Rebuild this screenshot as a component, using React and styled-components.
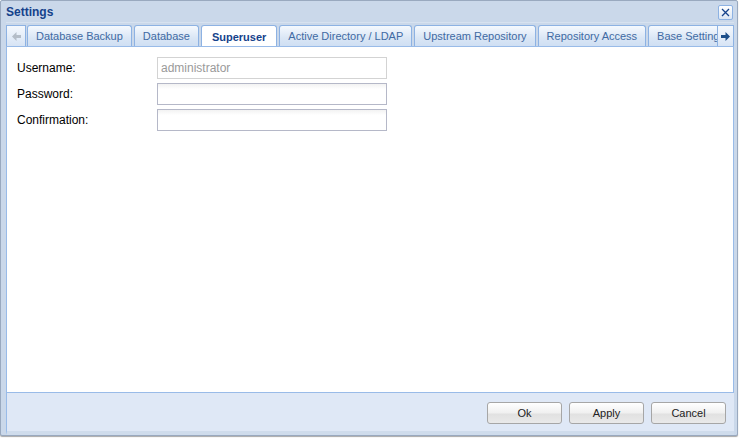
import React from "react";
import styled, { createGlobalStyle } from "styled-components";

const GlobalStyle = createGlobalStyle`
  html, body {
    margin: 0;
    padding: 0;
    background: #ffffff;
  }
  body {
    font-family: "Liberation Sans", Arial, sans-serif;
    font-size: 11px;
  }
`;

const Page = styled.div`
  width: 740px;
  height: 438px;
  overflow: hidden;
  background: #ffffff;
`;

const Window = styled.div`
  box-sizing: border-box;
  width: 738px;
  height: 436px;
  border: 1px solid #99a9bf;
  border-radius: 2px;
  background: #cad8ea;
  box-shadow: 0 1px 1px #a9a9a9;
  display: flex;
  flex-direction: column;
  padding: 0 3px 0 5px;
`;

const Header = styled.div`
  height: 21px;
  display: flex;
  align-items: center;
  justify-content: space-between;
`;

const Title = styled.span`
  font-weight: bold;
  font-size: 12px;
  color: #15428b;
`;

const CloseButton = styled.button`
  box-sizing: border-box;
  width: 15px;
  height: 15px;
  margin-top: 2px;
  margin-right: 1px;
  padding: 0;
  border: 1px solid #8db2e3;
  border-radius: 2px;
  background: linear-gradient(#ffffff, #dbe6f4);
  display: flex;
  align-items: center;
  justify-content: center;
`;

const Body = styled.div`
  flex: 1;
  display: flex;
  flex-direction: column;
  background: #dfe8f6;
  border-left: 1px solid #99bbe8;
  border-bottom: 4px solid #cfdcec;
`;

const TabStrip = styled.div`
  height: 24px;
  display: flex;
  align-items: flex-end;
  background: #cad8ea;
  border-top: 1px solid #d7e2f0;
  box-sizing: border-box;
`;

const Scroller = styled.div`
  width: ${(p) => p.$w}px;
  height: 21px;
  flex: none;
  display: flex;
  align-items: center;
  justify-content: center;
  box-sizing: border-box;
  border: 1px solid #8db2e3;
  border-bottom: none;
  background: linear-gradient(#f4f8fd, #d7e4f5);
`;

const Tabs = styled.div`
  flex: 1;
  display: flex;
  align-items: flex-end;
  overflow: hidden;
  gap: 2px;
  padding-left: 1px;
  height: 21px;
`;

const Tab = styled.div`
  flex: none;
  box-sizing: border-box;
  height: ${(p) => (p.$active ? 22 : 21)}px;
  margin-bottom: ${(p) => (p.$active ? -1 : 0)}px;
  padding: 0 ${(p) => (p.$active ? 10 : 8)}px;
  display: flex;
  align-items: center;
  border: 1px solid #8db2e3;
  border-bottom: none;
  border-radius: 3px 3px 0 0;
  background: ${(p) =>
    p.$active
      ? "#ffffff"
      : "linear-gradient(#f5f9fe, #dae6f5 60%, #cfdff3)"};
  color: ${(p) => (p.$active ? "#15428b" : "#416aa3")};
  font-weight: ${(p) => (p.$active ? "bold" : "normal")};
  white-space: nowrap;
  position: relative;
  z-index: ${(p) => (p.$active ? 1 : 0)};
`;

const Panel = styled.div`
  flex: 1;
  background: #ffffff;
  border: 1px solid #99bbe8;
  border-left: none;
  padding: 10px 10px;
  display: flex;
  flex-direction: column;
  gap: 4px;
`;

const Row = styled.div`
  display: flex;
  align-items: center;
  height: 22px;
`;

const Label = styled.label`
  width: 140px;
  color: #000000;
  font-size: 12px;
`;

const Input = styled.input`
  box-sizing: border-box;
  width: 230px;
  height: 22px;
  margin: 0;
  padding: 1px 3px;
  border: 1px solid ${(p) => (p.disabled ? "#d3d3d3" : "#b5b8c8")};
  background: ${(p) =>
    p.disabled ? "#ffffff" : "linear-gradient(#f2f2f2, #ffffff 5px)"};
  font-family: "Liberation Sans", Arial, sans-serif;
  font-size: 12px;
  color: ${(p) => (p.disabled ? "#9a9a9a" : "#000000")};
  outline: none;
`;

const Footer = styled.div`
  height: 38px;
  display: flex;
  align-items: flex-start;
  justify-content: flex-end;
  gap: 7px;
  padding: 9px 8px 0 0;
  box-sizing: border-box;
`;

const Button = styled.button`
  box-sizing: border-box;
  width: 75px;
  height: 22px;
  padding: 0;
  border: 1px solid #a6a6a6;
  border-radius: 3px;
  background: linear-gradient(#ffffff, #f0f0f0 50%, #e1e1e1 55%, #e9e9e9);
  font-family: "Liberation Sans", Arial, sans-serif;
  font-size: 11px;
  color: #222222;
`;

const Arrow = ({ color, flip }) => (
  <svg
    width="9"
    height="9"
    viewBox="0 0 9 9"
    style={flip ? { transform: "scaleX(-1)" } : undefined}
  >
    <path d="M0 4.5L4.5 0V3H9V6H4.5V9Z" fill={color} />
  </svg>
);

export default function App() {
  const tabs = [
    "Database Backup",
    "Database",
    "Superuser",
    "Active Directory / LDAP",
    "Upstream Repository",
    "Repository Access",
    "Base Settings",
  ];

  return (
    <Page>
      <GlobalStyle />
      <Window>
        <Header>
          <Title>Settings</Title>
          <CloseButton>
            <svg width="9" height="9" viewBox="0 0 9 9">
              <path
                d="M1 1L8 8M8 1L1 8"
                stroke="#15428b"
                strokeWidth="1.3"
              />
            </svg>
          </CloseButton>
        </Header>
        <TabStrip>
          <Scroller $w={20}>
            <Arrow color="#b4bdc8" />
          </Scroller>
          <Tabs>
            {tabs.map((t) => (
              <Tab key={t} $active={t === "Superuser"}>
                {t}
              </Tab>
            ))}
          </Tabs>
          <Scroller $w={17}>
            <Arrow color="#1c4e8a" flip />
          </Scroller>
        </TabStrip>
        <Body>
          <Panel>
            <Row>
              <Label>Username:</Label>
              <Input disabled value="administrator" readOnly />
            </Row>
            <Row>
              <Label>Password:</Label>
              <Input type="password" />
            </Row>
            <Row>
              <Label>Confirmation:</Label>
              <Input type="password" />
            </Row>
          </Panel>
          <Footer>
            <Button>Ok</Button>
            <Button>Apply</Button>
            <Button>Cancel</Button>
          </Footer>
        </Body>
      </Window>
    </Page>
  );
}
